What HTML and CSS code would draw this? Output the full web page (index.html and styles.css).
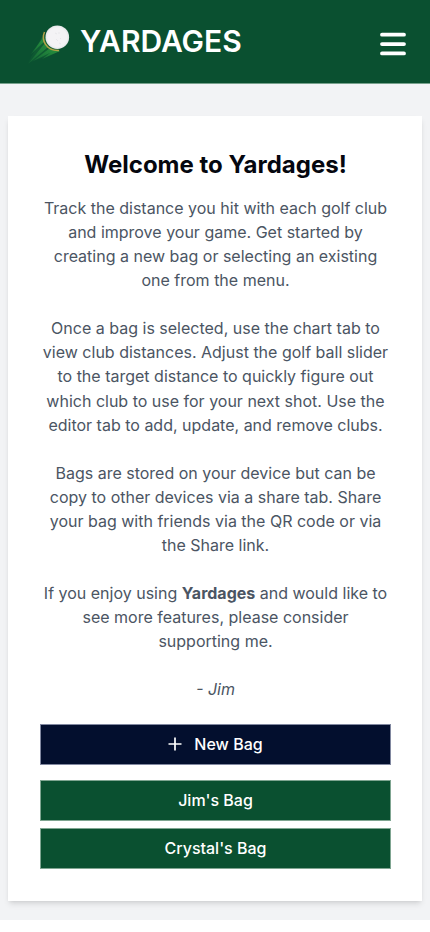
FILE: index.html
```
<!DOCTYPE html>
<html lang="en">
<head>
<meta charset="utf-8">
<title>Yardages</title>
<link rel="stylesheet" href="styles.css">
</head>
<body>
<header class="header">
  <div class="brand">
    <svg class="logo" viewBox="0 0 50 50" aria-hidden="true">
      <defs>
        <linearGradient id="trail" x1="1" y1="0" x2="0" y2="1">
          <stop offset="0.2" stop-color="#27913e"/>
          <stop offset="1" stop-color="#27913e" stop-opacity="0.15"/>
        </linearGradient>
        <radialGradient id="ball">
          <stop offset="0.8" stop-color="#f4f3f5"/>
          <stop offset="1" stop-color="#e4e5e7"/>
        </radialGradient>
      </defs>
      <path d="M19 15 4 43 36 31z" fill="url(#trail)" opacity="0.3"/>
      <path d="M19.5 17 7 34 21 21zM21 23 4 44 24 27zM26 28 9 41 30 31zM30 30 18 39 36 31z" fill="url(#trail)"/>
      <path d="M20.5 12C17 20 22 31 35 30.5" fill="none" stroke="#b5a348" stroke-width="1.5"/>
      <circle cx="33.3" cy="17.2" r="11.8" fill="url(#ball)"/>
      <path d="M31 13l2 1M35 12v2M32 19l2 2M36 18l1 1M35 23l2 1" stroke="#e9e8eb" stroke-width="1"/>
    </svg>
    <span class="name">YARDAGES</span>
  </div>
  <svg class="menu" viewBox="0 0 28 24" role="img" aria-label="Menu">
    <path d="M3 2.7h22M3 12.1h22M3 21.4h22" fill="none" stroke="#fff" stroke-width="3.8" stroke-linecap="round"/>
  </svg>
</header>
<main class="main">
  <section class="card">
    <h1 class="title">Welcome to Yardages!</h1>
    <div class="copy">
      <p>Track the distance you hit with each golf club and improve your game. Get started by creating a new bag or selecting an existing one from the menu.</p>
      <p>Once a bag is selected, use the chart tab to view club distances. Adjust the golf ball slider to the target distance to quickly figure out which club to use for your next shot. Use the editor tab to add, update, and remove clubs.</p>
      <p>Bags are stored on your device but can be copy to other devices via a share tab. Share your bag with friends via the QR code or via the Share link.</p>
      <p>If you enjoy using <strong>Yardages</strong> and would like to see more features, please consider supporting me.</p>
      <p><em>- Jim</em></p>
    </div>
    <button class="button button-new">
      <svg class="plus" viewBox="0 0 14 14" aria-hidden="true"><path d="M7 .5v13M.5 7h13" stroke="#fff" stroke-width="1.7"/></svg>
      New Bag
    </button>
    <button class="button">Jim's Bag</button>
    <button class="button">Crystal's Bag</button>
  </section>
</main>
</body>
</html>
```
FILE: styles.css
```
* { box-sizing: border-box; }
body {
  margin: 0;
  background: #fff;
  font-family: Inter, sans-serif;
  font-size: 16px;
  line-height: 24.04px;
}
.header {
  display: flex;
  justify-content: space-between;
  height: 84px;
  padding: 20px 23px 0 24px;
  background: #0a5030;
  border-bottom: 1px solid #77a18c;
}
.brand { display: flex; }
.logo { width: 50px; height: 50px; }
.name {
  margin-left: 6px;
  color: #fff;
  font-size: 30px;
  font-weight: 600;
  line-height: 42px;
}
.menu { width: 28px; height: 24px; margin-top: 12px; }
.main {
  height: 836px;
  padding: 32px 8px 0;
  background: #f2f3f5;
}
.card {
  height: 785px;
  padding: 33px 31px 0 32px;
  background: #fff;
  box-shadow: 0 4px 6px -1px #0000001a, 0 2px 4px -2px #0000001a;
  text-align: center;
}
.title {
  margin: 0 0 15.2px;
  color: #05070f;
  font-size: 24px;
  font-weight: 700;
  line-height: 32px;
}
.copy { color: #4b5563; }
.copy p { margin: 0 0 24px; }
.copy p:last-child { margin-bottom: 23px; }
.copy strong { font-weight: 700; }
.button {
  display: flex;
  align-items: center;
  justify-content: center;
  width: 351px;
  height: 41px;
  margin: 0 0 7px;
  padding: 0;
  border: 1px solid #7fa591;
  background: #0a5030;
  color: #fff;
  font: 500 16px/24px Inter, sans-serif;
}
.button-new {
  margin-bottom: 15px;
  border-color: #8188a0;
  background: #030f2e;
}
.plus { width: 14px; height: 14px; margin-right: 12px; }
```
